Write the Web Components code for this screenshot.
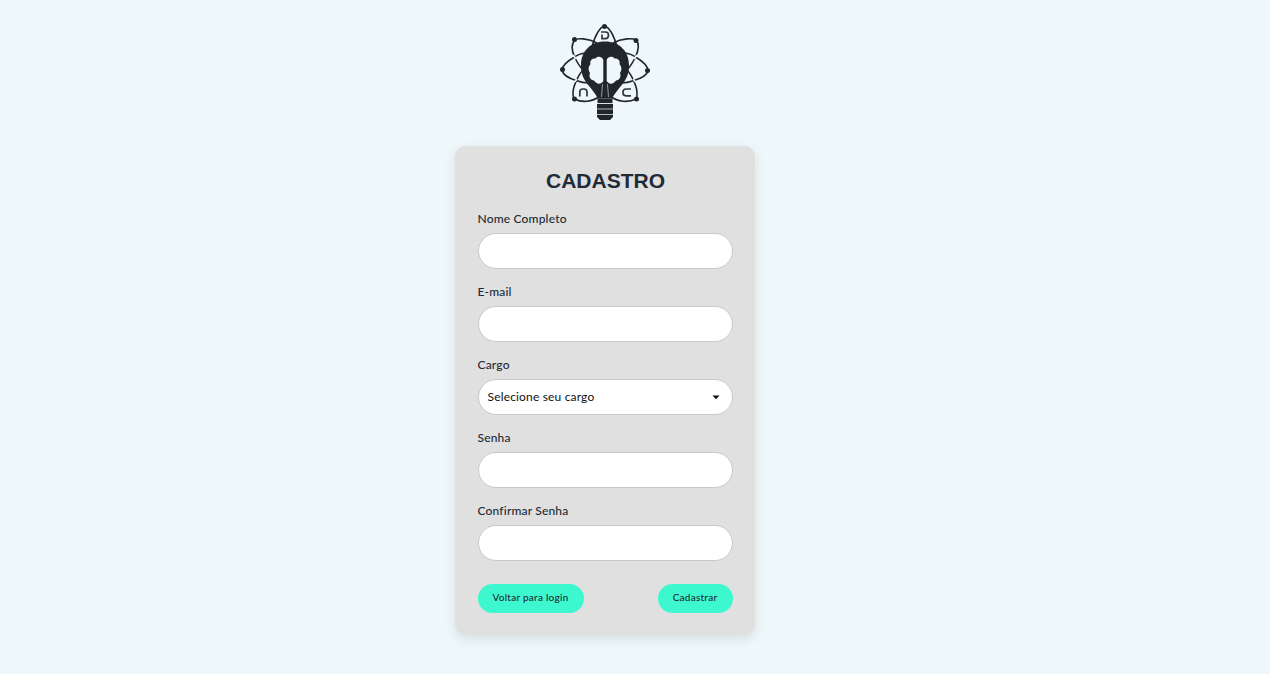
<!DOCTYPE html>
<html lang="pt-BR">
<head>
<meta charset="utf-8">
<title>Cadastro</title>
<style>
html,body{margin:0;height:100%;background:#eef7f9}
body{font-family:Lato,"Open Sans",sans-serif;color:#212b36;overflow:hidden}
</style>
</head>
<body>
<cadastro-page></cadastro-page>
<script>
const define=(name,html,setup)=>customElements.define(name,class extends HTMLElement{
  constructor(){
    super();
    const t=document.createElement('template');
    t.innerHTML=html;
    this.attachShadow({mode:'open'}).append(t.content.cloneNode(true));
  }
  connectedCallback(){ if(setup) setup(this); }
});

define('brand-logo',`<style>:host{display:block;width:100px;height:106px}svg{display:block}</style>
<svg width="100" height="106" viewBox="555 18 100 106" fill="none" stroke="#20262b" stroke-width="1.6">
  <!-- orbits -->
  <path d="M592 47C595 35 600 27 604.5 26C609 27 614 35 617 47"/>
  <path d="M597 43C588 38 577 38 575 40C572 43 571 49 574.500 57C577 62 580 67 583 70"/>
  <path d="M586 53C581 53.500 577 55 574.500 57C566 62 562 67 562 70C563 75 568 78 576 80.500C580 82 585 83 589 83"/>
  <path d="M583 70C579 74 573 86 573 93C573 97 574 99 575 99C582 103 592 102 600 96"/>
  <path d="M613 43C622 38 633 38 636 40C639 43 639 49 635.500 57C633 62 630 67 627 70"/>
  <path d="M624 53C629 53.500 633 55 635.500 57C644 62 648 67 648 71C647 75 642 78 634 80.500C630 82 625 83 621 83"/>
  <path d="M627 70C631 74 637 86 637 93C637 97 637 99 636 99C628 103 618 102 610 96"/>
  <g stroke="#eef7f9" stroke-width="1.8"><path d="M573 55l3 4M574.500 82l2.500-3M634 59l3-4M633 79l2.500 3"/></g>
  <g fill="#20262b" stroke="none">
    <circle cx="604.5" cy="26.500" r="2.500"/><circle cx="574.500" cy="39.500" r="2.500"/><circle cx="636" cy="40.500" r="2.500"/>
    <circle cx="562.500" cy="69.500" r="2.500"/><circle cx="647.500" cy="70.500" r="2.500"/><circle cx="574.500" cy="99" r="2.500"/><circle cx="636.500" cy="99" r="2.500"/>
    <!-- bulb -->
    <path d="M605 41.500C590 41.500 581 52 581 65C581 75 584 80 589 86C594 92 596 95 598 98.500H612C614 95 616 92 621 86C626 80 629 75 629 65C629 52 620 41.500 605 41.500Z"/>
    <path d="M597.500 98.500h15v5h.5v13.500l-3 3h-10l-3-3v-13.500h.5z"/>
  </g>
  <!-- brain -->
  <g fill="#eef7f9" stroke="none">
    <path d="M603.300 60C602 56 597 56 595.500 58.500C592 58 589.500 61 590.500 64C588 67 588 70 590 73C588.500 77 590.500 80 594 80.500C596 83 600 86 603.300 81Z"/>
    <path d="M606.700 60C608 56 613 56 614.500 58.500C618 58 620.500 61 619.500 64C622 67 622 70 620 73C621.500 77 619.500 80 616 80.500C614 83 610 86 606.700 81Z"/>
  </g>
  <g stroke="#aeb6b9" stroke-width=".8"><path d="M602.500 84L601.500 97M607.500 84L608.500 97"/></g>
  <g stroke="#eef7f9" stroke-width=".9"><path d="M597 103.500h16"/></g>
  <g stroke="#c3cbce" stroke-width=".9"><path d="M597 109h16M597 114.500h16"/></g>
  <!-- ornament -->
  <g stroke-width="1.7" stroke="#30363b"><path d="M601 32h4.500q3 0 3 3.300t-3 3.300h-3.500v-4"/><path d="M579.800 96.500v-4.500q0-3 3-3h1.200q3 0 3 3v4.500"/><path d="M631 89h-5q-3 0-3 3v.8q0 3 3 3h5"/></g>
</svg>`);

define('form-card',`<style>
:host{display:block;box-sizing:border-box;width:300px;height:489px;padding:23px 22px 22px 23px;border-radius:11px;background:#e0e0e0;box-shadow:0 4px 12px rgba(0,0,0,.1)}
h1{margin:0 0 18px;font:bold 21px/24px "Liberation Sans",Arial,sans-serif;text-align:center;color:#212b36}
.fields{display:grid;gap:16px}
footer{display:flex;justify-content:space-between;margin-top:23px}
</style><h1><slot name="title"></slot></h1><div class="fields"><slot></slot></div><footer><slot name="actions"></slot></footer>`);

define('form-field',`<style>
:host{display:block;height:57px}
:host(:first-of-type){padding-top:0}
.label{display:block;height:22px;line-height:16px;font-size:12px;font-weight:500;white-space:nowrap;letter-spacing:.18px;margin-left:-.5px}
.box{display:flex;align-items:center;justify-content:space-between;box-sizing:border-box;height:36px;border:1px solid #c8c8c8;border-radius:18px;background:#fff;padding:0 12px 2px 8.500px;font-size:12px;letter-spacing:.17px;color:#111}
svg{display:none;margin-top:2px}:host([select]) svg{display:block}
</style><label class="label"></label><div class="box"><span><slot></slot></span><svg width="8" height="5" viewBox="0 0 8 5"><path d="M.5.5h7L4 4.200z" fill="#111"/></svg></div>`,
el=>{el.shadowRoot.querySelector('.label').textContent=el.getAttribute('label')});

define('pill-button',`<style>
:host{display:block;padding-top:1px}
button{display:block;width:var(--w);height:29px;border:0;border-radius:15px;padding:0 1px 3px 0;background:#3df8ce;color:#212b36;font-family:inherit;font-size:10px;font-weight:500;letter-spacing:.25px;white-space:nowrap}
</style><button type="button"><slot></slot></button>`);

define('cadastro-page',`<style>
:host{display:flex;flex-direction:column;align-items:center;box-sizing:border-box;width:1210px;padding-top:18px}
form-card{margin-top:22px}
</style>
<brand-logo></brand-logo>
<form-card>
  <span slot="title">CADASTRO</span>
  <form-field label="Nome Completo"></form-field>
  <form-field label="E-mail"></form-field>
  <form-field label="Cargo" select>Selecione seu cargo</form-field>
  <form-field label="Senha"></form-field>
  <form-field label="Confirmar Senha"></form-field>
  <pill-button slot="actions" style="--w:106px">Voltar para login</pill-button>
  <pill-button slot="actions" style="--w:75px">Cadastrar</pill-button>
</form-card>`);
</script>
</body>
</html>
